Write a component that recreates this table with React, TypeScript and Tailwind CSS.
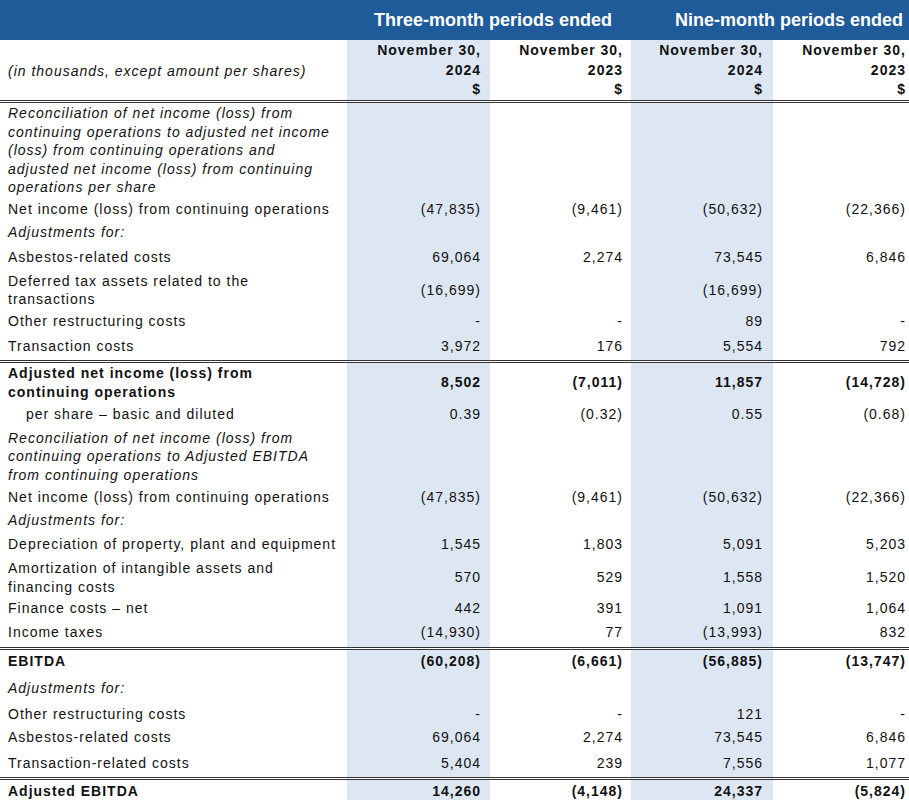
import React from 'react'

type Cell = string | null

interface RowProps {
  label: React.ReactNode
  values?: Cell[]
  h: string
  bold?: boolean
  italic?: boolean
  indent?: boolean
  top?: boolean
}

const cols = 'grid grid-cols-[347px_143px_141px_142px_136px]'
const shade = 'bg-[#dde7f3]'
const pads = ['pr-[9px]', 'pr-[8px]', 'pr-[10px]', 'pr-[3px]']

function Row({ label, values = [null, null, null, null], h, bold, italic, indent, top }: RowProps) {
  return (
    <div className={`${cols} ${h} ${top ? 'border-t-[3px] border-double border-[#333]' : ''}`}>
      <div
        className={`flex items-center leading-[18.5px] ${indent ? 'pl-[26px]' : 'pl-[8px]'} ${bold ? 'font-bold' : ''} ${italic ? 'italic' : ''}`}
      >
        <div>{label}</div>
      </div>
      {values.map((v, i) => (
        <div
          key={i}
          className={`flex items-center justify-end ${pads[i]} ${i % 2 === 0 ? shade : 'bg-white'} ${bold ? 'font-bold' : ''}`}
        >
          {v}
        </div>
      ))}
    </div>
  )
}

export default function App() {
  return (
    <div className="w-[909px] h-[800px] overflow-hidden bg-white text-[#111] text-[14px] tracking-[1px] font-['Liberation_Sans',Arial,sans-serif]">
      <div className="h-[40px] bg-[#1e5b98] flex items-center text-white font-bold text-[18px] tracking-normal">
        <div className="w-[631px] text-right pr-[19px]">Three-month periods ended</div>
        <div className="w-[278px] text-right pr-[6px]">Nine-month periods ended</div>
      </div>
      <div className={`${cols} h-[60px]`}>
        <div className="flex items-center pl-[8px] italic pt-[2px]">(in thousands, except amount per shares)</div>
        {['2024', '2023', '2024', '2023'].map((y, i) => (
          <div
            key={i}
            className={`flex flex-col items-end justify-center font-bold leading-[19.5px] pt-[1px] ${pads[i]} ${i % 2 === 0 ? shade : 'bg-white'}`}
          >
            <span>November 30,</span>
            <span>{y}</span>
            <span>$</span>
          </div>
        ))}
      </div>

      <Row
        top
        h="h-[98px]"
        italic
        label={
          <>
            Reconciliation of net income (loss) from
            <br />
            continuing operations to adjusted net income
            <br />
            (loss) from continuing operations and
            <br />
            adjusted net income (loss) from continuing
            <br />
            operations per share
          </>
        }
      />
      <Row h="h-[22px]" label="Net income (loss) from continuing operations" values={['(47,835)', '(9,461)', '(50,632)', '(22,366)']} />
      <Row h="h-[25px]" italic label="Adjustments for:" />
      <Row h="h-[25px]" label="Asbestos-related costs" values={['69,064', '2,274', '73,545', '6,846']} />
      <Row
        h="h-[40px]"
        label={
          <>
            Deferred tax assets related to the
            <br />
            transactions
          </>
        }
        values={['(16,699)', null, '(16,699)', null]}
      />
      <Row h="h-[22px]" label="Other restructuring costs" values={['-', '-', '89', '-']} />
      <Row h="h-[28px]" label="Transaction costs" values={['3,972', '176', '5,554', '792']} />

      <Row
        top
        h="h-[42px]"
        bold
        label={
          <>
            Adjusted net income (loss) from
            <br />
            continuing operations
          </>
        }
        values={['8,502', '(7,011)', '11,857', '(14,728)']}
      />
      <Row h="h-[24px]" indent label="per share – basic and diluted" values={['0.39', '(0.32)', '0.55', '(0.68)']} />
      <Row
        h="h-[61px]"
        italic
        label={
          <>
            Reconciliation of net income (loss) from
            <br />
            continuing operations to Adjusted EBITDA
            <br />
            from continuing operations
          </>
        }
      />
      <Row h="h-[21px]" label="Net income (loss) from continuing operations" values={['(47,835)', '(9,461)', '(50,632)', '(22,366)']} />
      <Row h="h-[24px]" italic label="Adjustments for:" />
      <Row h="h-[25px]" label="Depreciation of property, plant and equipment" values={['1,545', '1,803', '5,091', '5,203']} />
      <Row
        h="h-[41px]"
        label={
          <>
            Amortization of intangible assets and
            <br />
            financing costs
          </>
        }
        values={['570', '529', '1,558', '1,520']}
      />
      <Row h="h-[20px]" label="Finance costs – net" values={['442', '391', '1,091', '1,064']} />
      <Row h="h-[29px]" label="Income taxes" values={['(14,930)', '77', '(13,993)', '832']} />

      <Row top h="h-[26px]" bold label="EBITDA" values={['(60,208)', '(6,661)', '(56,885)', '(13,747)']} />
      <Row h="h-[31px]" italic label="Adjustments for:" />
      <Row h="h-[21px]" label="Other restructuring costs" values={['-', '-', '121', '-']} />
      <Row h="h-[25px]" label="Asbestos-related costs" values={['69,064', '2,274', '73,545', '6,846']} />
      <Row h="h-[27px]" label="Transaction-related costs" values={['5,404', '239', '7,556', '1,077']} />
      <Row top h="h-[26px]" bold label="Adjusted EBITDA" values={['14,260', '(4,148)', '24,337', '(5,824)']} />
    </div>
  )
}
